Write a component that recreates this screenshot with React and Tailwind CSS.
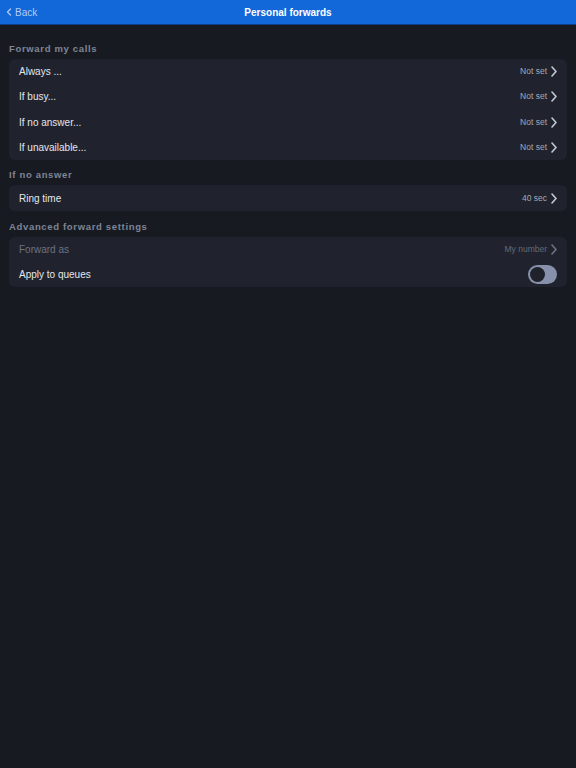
import { ChevronLeft } from "lucide-react";

const FONT = { fontFamily: '"Liberation Sans", Arial, sans-serif' };

function Chevron({ className }) {
  return (
    <svg width="6" height="11" viewBox="0 0 6 11" fill="none" className={className}>
      <path d="M1 1l4 4.5L1 10" stroke="currentColor" strokeWidth="1.6" strokeLinecap="round" strokeLinejoin="round" />
    </svg>
  );
}

function SectionLabel({ children, tall }) {
  return (
    <div
      className={
        tall
          ? "px-[9px] pt-[10px] pb-[4px] text-[9.5px] font-bold leading-[12px] tracking-[0.07em] text-[#7f8596]"
          : "px-[9px] pt-[9px] pb-[4px] text-[9.5px] font-bold leading-[12px] tracking-[0.07em] text-[#7f8596]"
      }
    >
      {children}
    </div>
  );
}

function Row({ label, value, muted, tall }) {
  return (
    <div className={tall ? "flex h-[26px] items-center justify-between px-[10px]" : "flex h-[25px] items-center justify-between px-[10px]"}>
      <span className={muted ? "text-[10px] text-[#6d7282]" : "text-[10px] text-[#e4e6eb]"}>{label}</span>
      <span className="flex items-center gap-[4px]">
        <span className={muted ? "text-[8.5px] text-[#646a79]" : "text-[8.5px] text-[#a3a8b6]"}>{value}</span>
        <Chevron className={muted ? "text-[#6d7384]" : "text-[#c3c8d6]"} />
      </span>
    </div>
  );
}

function Card({ children }) {
  return <div className="mx-[9px] rounded-[6px] bg-[#20232d]">{children}</div>;
}

export default function App() {
  return (
    <div className="h-[768px] w-[576px] bg-[#181a21]" style={FONT}>
      <header className="relative flex h-[25px] items-center justify-center border-b border-[#0c3d86] bg-[#1267d9]">
        <button className="absolute left-[3px] top-0 flex h-[24px] items-center gap-0 text-[10px] text-[#b3cdf3]">
          <ChevronLeft size={12} strokeWidth={2.6} />
          Back
        </button>
        <h1 className="text-[10px] font-bold text-white">Personal forwards</h1>
      </header>

      <div className="pt-[9px]">
        <SectionLabel>Forward my calls</SectionLabel>
        <Card>
          <Row label="Always ..." value="Not set" />
          <Row label="If busy..." value="Not set" />
          <Row label="If no answer..." value="Not set" tall />
          <Row label="If unavailable..." value="Not set" />
        </Card>

        <SectionLabel>If no answer</SectionLabel>
        <Card>
          <Row label="Ring time" value="40 sec" tall />
        </Card>

        <SectionLabel tall>Advanced forward settings</SectionLabel>
        <Card>
          <Row label="Forward as" value="My number" muted />
          <div className="flex h-[25px] items-center justify-between px-[10px]">
            <span className="text-[10px] text-[#e4e6eb]">Apply to queues</span>
            <span className="flex h-[19px] w-[29px] items-center rounded-full bg-[#8891ab] px-[2px]">
              <span className="h-[15px] w-[15px] rounded-full bg-[#1f222b]" />
            </span>
          </div>
        </Card>
      </div>
    </div>
  );
}
